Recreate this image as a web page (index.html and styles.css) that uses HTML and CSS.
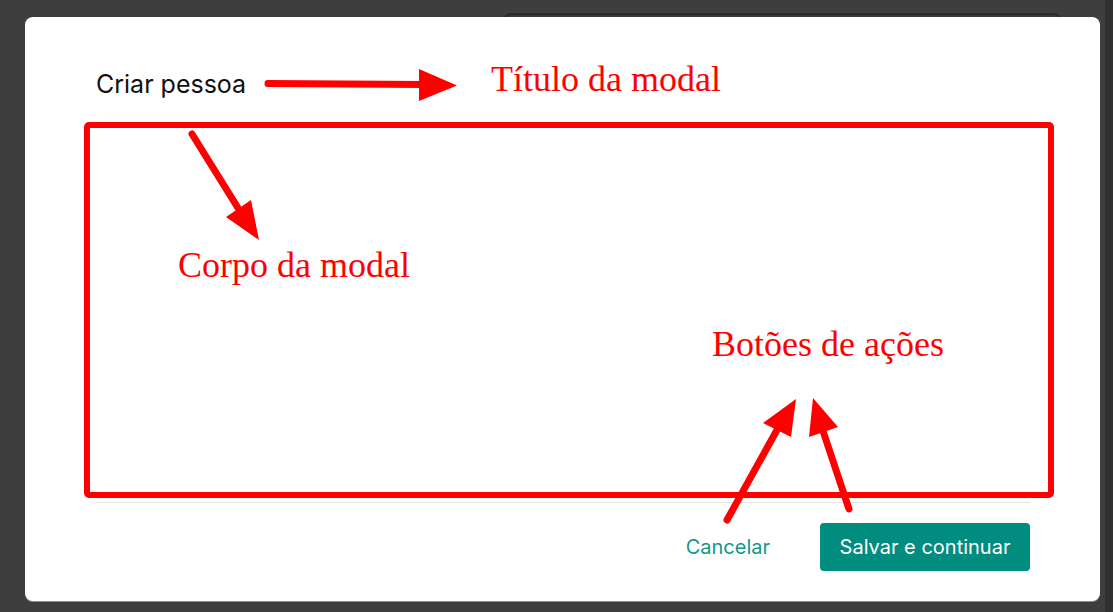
FILE: index.html
```html
<!DOCTYPE html>
<html lang="pt-BR">
<head>
<meta charset="utf-8">
<title>Criar pessoa</title>
<link rel="stylesheet" href="styles.css">
</head>
<body>
<div class="backdrop-card"></div>
<div class="scrollbar"></div>
<div class="modal">
  <header class="modal-header">
    <h2 class="modal-title">Criar pessoa</h2>
  </header>
  <section class="modal-body"></section>
  <footer class="modal-footer">
    <button class="btn btn-text">Cancelar</button>
    <button class="btn btn-primary">Salvar e continuar</button>
  </footer>
</div>
<svg class="annotations" width="1113" height="612" viewBox="0 0 1113 612" xmlns="http://www.w3.org/2000/svg">
  <rect x="87" y="125" width="964" height="370" rx="2" fill="none" stroke="#ff0000" stroke-width="6"/>
  <g stroke="#ff0000" stroke-width="7" stroke-linecap="round">
    <line x1="268" y1="83.5" x2="424" y2="84.5"/>
    <line x1="192" y1="134" x2="238" y2="208"/>
    <line x1="727" y1="520" x2="777" y2="430"/>
    <line x1="849" y1="509" x2="823" y2="431"/>
  </g>
  <g fill="#ff0000">
    <polygon points="419,69 457,85.5 419,101"/>
    <polygon points="226,217 251,200 259,240"/>
    <polygon points="763,423 791,437 796,399"/>
    <polygon points="809,437 838,427 813,398"/>
  </g>
  <g class="note">
    <text x="491" y="91">Título da modal</text>
    <text x="178" y="277">Corpo da modal</text>
    <text x="712" y="356">Botões de ações</text>
  </g>
</svg>
</body>
</html>
```
FILE: styles.css
```css
html, body {
  margin: 0;
  height: 100%;
}
body {
  position: relative;
  background: #3e3e3e;
  overflow: hidden;
  padding: 17px 0 0 25px;
  box-sizing: border-box;
  font-family: Inter, "Noto Sans", sans-serif;
}
.backdrop-card {
  position: absolute;
  left: 503px;
  top: 13px;
  width: 559px;
  height: 60px;
  border: 2px solid #2a2a2a;
  border-radius: 8px;
  background: #393939;
  box-sizing: border-box;
}
.scrollbar {
  position: absolute;
  right: 0;
  top: 0;
  width: 8px;
  height: 100%;
  background: #313131;
}
.modal {
  position: relative;
  width: 1075px;
  height: 584px;
  background: #ffffff;
  border-radius: 8px;
  box-shadow: 0 1px 0 #8c8c8c;
  display: flex;
  flex-direction: column;
  padding: 52px 70px 30px 71px;
  box-sizing: border-box;
}
.modal-header {
  flex: none;
}
.modal-title {
  margin: 0;
  font-size: 25px;
  line-height: 30px;
  font-weight: 400;
  color: #111111;
  letter-spacing: 0;
}
.modal-body {
  flex: 1;
  border-bottom: 1px solid #e2e2e2;
}
.modal-footer {
  flex: none;
  display: flex;
  justify-content: flex-end;
  align-items: center;
  gap: 34px;
  padding-top: 20px;
}
.btn {
  font-family: Inter, "Noto Sans", sans-serif;
  font-size: 20px;
  height: 48px;
  border: 0;
  border-radius: 4px;
  padding: 0 20px;
  cursor: pointer;
}
.btn-text {
  background: transparent;
  color: #15968a;
  padding: 0 16px;
}
.btn-primary {
  background: #008c7e;
  color: #ffffff;
  width: 210px;
  padding: 0;
}
.annotations {
  position: absolute;
  left: 0;
  top: 0;
  pointer-events: none;
}
.note text {
  font-family: "Liberation Serif", "Times New Roman", serif;
  font-size: 36px;
  fill: #ff0000;
}
```
